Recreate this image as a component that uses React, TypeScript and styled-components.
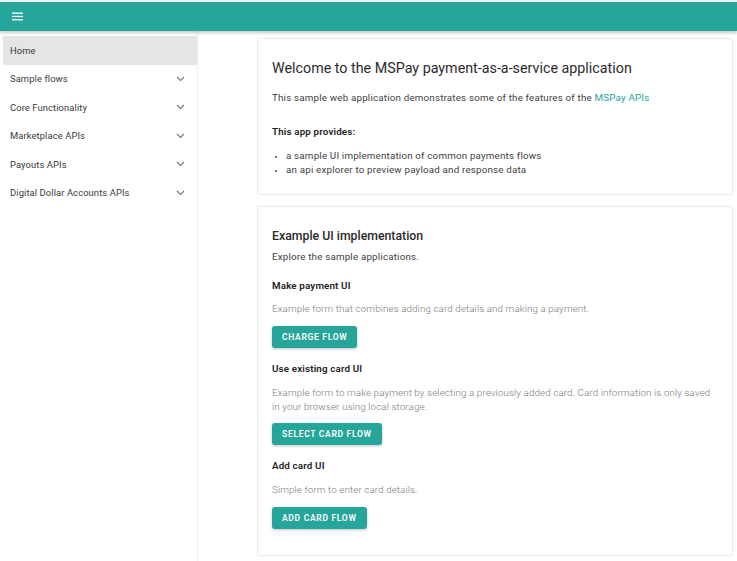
import React from "react";
import styled, { createGlobalStyle } from "styled-components";

const Global = createGlobalStyle`
  html, body { margin: 0; padding: 0; background: #fff; }
  body { font-family: Roboto, "Noto Sans", Arial, sans-serif; color: #333; }
  * { box-sizing: border-box; }
`;

const Page = styled.div`
  width: 737px;
  height: 561px;
  overflow: hidden;
  display: flex;
  flex-direction: column;
  background: #fff;
  border-top: 2px solid #eef2f2;
`;

const AppBar = styled.header`
  height: 29px;
  flex: none;
  background: #26a69a;
  display: flex;
  align-items: center;
  padding-left: 11px;
  box-shadow: 0 2px 3px rgba(0, 0, 0, 0.22);
  position: relative;
  z-index: 2;
`;

const MenuButton = styled.button`
  border: 0;
  background: transparent;
  padding: 0;
  width: 12px;
  height: 12px;
  display: flex;
  align-items: center;
  justify-content: center;
  cursor: pointer;
`;

const Body = styled.div`
  flex: 1;
  display: flex;
  min-height: 0;
`;

const Sidebar = styled.nav`
  width: 198px;
  flex: none;
  border-right: 1px solid #efefef;
  padding: 5px 0 0 3px;
  display: flex;
  flex-direction: column;
`;

const NavItem = styled.div<{ $active?: boolean }>`
  height: 28.5px;
  flex: none;
  display: flex;
  align-items: center;
  justify-content: space-between;
  padding: 0 12px 0 7px;
  font-size: 9.4px;
  color: #3a3a3a;
  letter-spacing: 0.1px;
  background: ${(p) => (p.$active ? "#e5e5e5" : "transparent")};
`;

const Main = styled.main`
  flex: 1;
  padding: 7px 4px 0 59px;
  display: flex;
  flex-direction: column;
  gap: 11px;
`;

const Card = styled.section<{ $height: number }>`
  height: ${(p) => p.$height}px;
  flex: none;
  border: 1px solid #ececec;
  border-radius: 3px;
  box-shadow: 0 0 2px rgba(0, 0, 0, 0.06);
  padding: 0 13px 0 14px;
  display: flex;
  flex-direction: column;
`;

const Title = styled.h1`
  margin: 20px 0 0;
  font-size: 14.3px;
  font-weight: 400;
  color: #2b2b2b;
  line-height: 19px;
`;

const SubTitle = styled.h2`
  margin: 21px 0 0;
  font-size: 12.3px;
  font-weight: 500;
  color: #2b2b2b;
  line-height: 16px;
`;

const Text = styled.p<{ $light?: boolean; $mt: number }>`
  margin: ${(p) => p.$mt}px 0 0;
  font-size: 9.8px;
  line-height: 14px;
  letter-spacing: ${(p) => (p.$light ? "0.1px" : "0.18px")};
  color: ${(p) => (p.$light ? "#7a7a7a" : "#3f3f3f")};
  font-weight: ${(p) => (p.$light ? 300 : 400)};
`;

const Strong = styled.h3<{ $mt: number }>`
  margin: ${(p) => p.$mt}px 0 0;
  font-size: 9.8px;
  line-height: 14px;
  font-weight: 600;
  color: #222;
  letter-spacing: 0.15px;
`;

const Link = styled.a`
  color: #26a69a;
  text-decoration: none;
`;

const List = styled.ul`
  margin: 10px 0 0;
  padding-left: 14px;
  font-size: 9.8px;
  line-height: 14px;
  color: #3f3f3f;
  letter-spacing: 0.18px;
  li::marker { font-size: 8px; }
`;

const Button = styled.button<{ $mt: number }>`
  align-self: flex-start;
  margin-top: ${(p) => p.$mt}px;
  height: 22px;
  flex: none;
  padding: 0 10px;
  border: 0;
  border-radius: 3px;
  background: #26a69a;
  color: #fff;
  font-family: Roboto, Arial, sans-serif;
  font-size: 8.5px;
  font-weight: 600;
  letter-spacing: 0.7px;
  text-transform: uppercase;
  box-shadow: 0 1px 3px rgba(0, 0, 0, 0.25);
  cursor: pointer;
`;

const Chevron = () => (
  <svg width="9" height="6" viewBox="0 0 9 6">
    <polyline points="1,1 4.5,4.5 8,1" fill="none" stroke="#777" strokeWidth="1.1" />
  </svg>
);

const Hamburger = () => (
  <svg width="11" height="9" viewBox="0 0 11 9">
    <rect x="0" y="0.5" width="11" height="1.3" fill="#fff" />
    <rect x="0" y="3.8" width="11" height="1.3" fill="#fff" />
    <rect x="0" y="7.1" width="11" height="1.3" fill="#fff" />
  </svg>
);

const navItems = [
  "Sample flows",
  "Core Functionality",
  "Marketplace APIs",
  "Payouts APIs",
  "Digital Dollar Accounts APIs",
];

export default function App() {
  return (
    <>
      <Global />
      <Page>
        <AppBar>
          <MenuButton aria-label="menu">
            <Hamburger />
          </MenuButton>
        </AppBar>
        <Body>
          <Sidebar>
            <NavItem $active>Home</NavItem>
            {navItems.map((n) => (
              <NavItem key={n}>
                <span>{n}</span>
                <Chevron />
              </NavItem>
            ))}
          </Sidebar>
          <Main>
            <Card $height={157}>
              <Title>Welcome to the MSPay payment-as-a-service application</Title>
              <Text $mt={13}>
                This sample web application demonstrates some of the features of the{" "}
                <Link href="#">MSPay APIs</Link>
              </Text>
              <Strong $mt={20}>This app provides:</Strong>
              <List>
                <li>a sample UI implementation of common payments flows</li>
                <li>an api explorer to preview payload and response data</li>
              </List>
            </Card>
            <Card $height={350}>
              <SubTitle>Example UI implementation</SubTitle>
              <Text $mt={6}>Explore the sample applications.</Text>
              <Strong $mt={15}>Make payment UI</Strong>
              <Text $light $mt={9}>Example form that combines adding card details and making a payment.</Text>
              <Button $mt={10}>Charge flow</Button>
              <Strong $mt={14}>Use existing card UI</Strong>
              <Text $light $mt={10}>
                Example form to make payment by selecting a previously added card. Card information is only saved
                in your browser using local storage.
              </Text>
              <Button $mt={9}>Select card flow</Button>
              <Strong $mt={14}>Add card UI</Strong>
              <Text $light $mt={10}>Simple form to enter card details.</Text>
              <Button $mt={10}>Add card flow</Button>
            </Card>
          </Main>
        </Body>
      </Page>
    </>
  );
}
